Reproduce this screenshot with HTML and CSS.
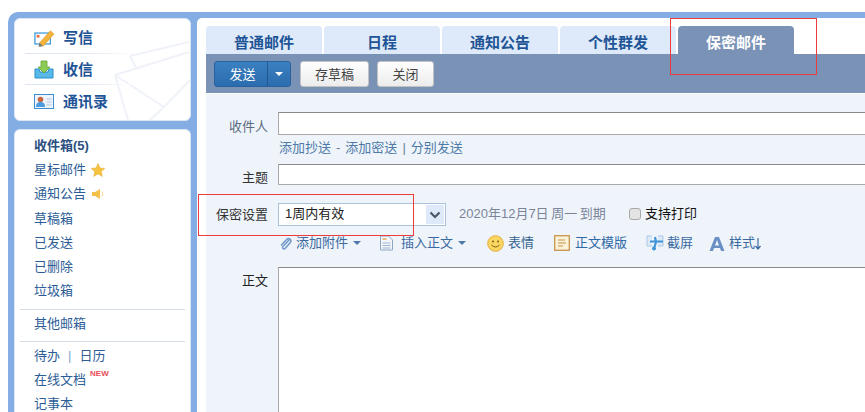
FILE: index.html
```html
<!DOCTYPE html>
<html lang="zh">
<head>
<meta charset="utf-8">
<title>写信</title>
<link rel="stylesheet" href="styles.css">
</head>
<body>
<div class="frame">
  <aside class="side">
    <div class="panel quick">
      <svg class="watermark" viewBox="0 0 90 80"><g fill="none" stroke="#eff2f8" stroke-width="2"><path d="M15 35 89 12M15 35 64 67 90 40M15 35 28 80M64 67 50 80"/><path d="M30 16 89 2M30 16l6 12"/></g></svg>
      <a class="quick-row">
        <svg class="qicon" viewBox="0 0 22 18"><rect x="1" y="3" width="17" height="12" fill="#fff" stroke="#3d9bd8" stroke-width="1.400"/><rect x="3" y="5" width="3" height="3" fill="#ef6a3a"/><path d="M6 14 18 0.500l4 3.500L10 17.500Z" fill="#f4b33a" stroke="#d98e1e" stroke-width=".6"/><path d="M5 18l1-4 4 3.500Z" fill="#777"/></svg>
        <span>写信</span>
      </a>
      <a class="quick-row">
        <svg class="qicon" viewBox="0 0 20 19"><path d="M1 9v9h18V9h-4l-1 3H6L5 9Z" fill="#58b8e6" stroke="#2b8ecb"/><path d="M7 1h6v6h3l-6 6-6-6h3Z" fill="#8ccb55" stroke="#5fa534" stroke-width=".8"/></svg>
        <span>收信</span>
      </a>
      <a class="quick-row">
        <svg class="qicon" viewBox="0 0 20 15"><rect x=".5" y=".5" width="19" height="14" fill="#eef4fb" stroke="#3f8fd0"/><circle cx="6.500" cy="5.500" r="2.800" fill="#c9683f"/><path d="M2 13c0-4 2-5 4.500-5s4.500 1 4.500 5Z" fill="#4b9be0"/><path d="M12.500 5h5M12.500 8h5M12.500 11h5" stroke="#b4c6dc"/></svg>
        <span>通讯录</span>
      </a>
    </div>
    <nav class="panel folders">
      <a class="folder strong">收件箱(5)</a>
      <a class="folder">星标邮件 <svg class="ficon" viewBox="0 0 14 14"><path d="M7 .5 9 5l4.800.4-3.600 3.200 1.100 4.800L7 10.900l-4.300 2.500 1.100-4.800L.2 5.400 5 5Z" fill="#f5c33f" stroke="#e3a92b" stroke-width=".5"/></svg></a>
      <a class="folder">通知公告 <svg class="ficon" viewBox="0 0 14 14"><path d="M1 5h3l5-3v10L4 9H1Z" fill="#f3c04a"/><path d="M11 4.500q1.500 2.500 0 5" fill="none" stroke="#f3d48a"/></svg></a>
      <a class="folder">草稿箱</a>
      <a class="folder">已发送</a>
      <a class="folder">已删除</a>
      <a class="folder">垃圾箱</a>
      <hr class="rule rule-a">
      <a class="folder">其他邮箱</a>
      <hr class="rule rule-b">
      <a class="folder">待办 <i class="bar">|</i> 日历</a>
      <a class="folder">在线文档<sup class="new">NEW</sup></a>
      <a class="folder">记事本</a>
    </nav>
  </aside>
  <main class="main">
    <div class="tabs">
      <a class="tab">普通邮件</a>
      <a class="tab">日程</a>
      <a class="tab">通知公告</a>
      <a class="tab">个性群发</a>
      <a class="tab active">保密邮件</a>
    </div>
    <div class="toolbar">
      <div class="send"><span class="send-label">发送</span><span class="send-drop"><i class="caret caret-white"></i></span></div>
      <button class="btn btn-save">存草稿</button>
      <button class="btn btn-close">关闭</button>
    </div>
    <form class="form">
      <div class="row">
        <label class="label muted nudge-a">收件人</label>
        <div class="input field-to"></div>
      </div>
      <div class="links">添加抄送<i class="sep">-</i>添加密送<i class="sep">|</i>分别发送</div>
      <div class="row">
        <label class="label nudge-b">主题</label>
        <div class="input field-subject"></div>
      </div>
      <div class="row row-secret">
        <label class="label">保密设置</label>
        <div class="select"><span class="select-value">1周内有效</span><span class="select-arrow"><svg viewBox="0 0 12 8" width="12" height="8"><path d="M1.500 1.500 6 6l4.500-4.500" fill="none" stroke="#4a5568" stroke-width="2.200"/></svg></span></div>
        <span class="expire">2020年12月7日 周一 到期</span>
        <span class="check"></span>
        <span class="print">支持打印</span>
      </div>
      <div class="tools">
        <a class="tool t-attach"><svg class="ticon" width="13" height="15" viewBox="0 0 13 15"><path d="M10.500 3.500 4 10.500c-1.500 1.800 1 3.200 2.300 1.800l5-5.800c2.200-2.800-1.500-5.500-3.700-3L2 9.500" fill="none" stroke="#6f97c8" stroke-width="1.500"/></svg>添加附件<i class="caret caret-blue"></i></a>
        <a class="tool t-insert"><svg class="ticon" width="15" height="16" viewBox="0 0 15 16"><path d="M1.500 1h8l4 4v10h-12Z" fill="#f3f6fb" stroke="#8ea7c6"/><path d="M3.500 4h4" stroke="#e9a957" stroke-width="1.500"/><path d="M3.500 8h8M3.500 10.500h8M3.500 13h8" stroke="#9db5d2"/></svg>插入正文<i class="caret caret-blue"></i></a>
        <a class="tool t-smile"><svg class="ticon" width="17" height="17" viewBox="0 0 17 17"><circle cx="8.500" cy="8.500" r="7.800" fill="#fbd75f" stroke="#e0ac3c"/><circle cx="6" cy="6.500" r="1" fill="#7a5a1a"/><circle cx="11" cy="6.500" r="1" fill="#7a5a1a"/><path d="M4.500 10q4 4 8 0" fill="none" stroke="#7a5a1a"/></svg>表情</a>
        <a class="tool t-template"><svg class="ticon" width="16" height="16" viewBox="0 0 16 16"><rect x=".7" y=".7" width="14.600" height="14.600" fill="#fbf1d8" stroke="#c7964d" stroke-width="1.300"/><path d="M4 5h7M4 8h8M4 11h5" stroke="#c7964d" stroke-width="1.200"/></svg>正文模版</a>
        <a class="tool t-shot"><svg class="ticon" width="18" height="16" viewBox="0 0 18 16"><path d="M6 1H1v10h5M12 1h5v10h-5" fill="#dceaf8" stroke="#a9c7e6"/><path d="M4 6.500h13M9 2l1 5-1.500 5" fill="none" stroke="#3f93d6" stroke-width="2.200"/><circle cx="8" cy="13.500" r="2" fill="#3f93d6"/></svg>截屏</a>
        <a class="tool t-style"><svg class="ticon" width="16" height="15" viewBox="0 0 16 15"><path d="M6 1h4l5.500 14h-3.500l-1-3H5l-1 3H.5ZM6 9.500h4L8 4Z" fill="#6a8fc4" fill-rule="evenodd"/></svg>样式<svg class="down" width="6" height="12" viewBox="0 0 6 12"><path d="M3 0v11M.5 8 3 11l2.500-3" fill="none" stroke="#3a6a9f" stroke-width="1.200"/></svg></a>
      </div>
      <div class="row row-body">
        <label class="label">正文</label>
        <div class="input editor"></div>
      </div>
    </form>
  </main>
</div>
<div class="mark mark-tab"></div>
<div class="mark mark-secret"></div>
</body>
</html>
```
FILE: styles.css
```css
* { box-sizing: border-box; }
html, body { margin: 0; height: 412px; overflow: hidden; background: #fff; }
body {
  position: relative;
  padding: 12px 0 0 8px;
  font: 13px/20px "Liberation Sans", "Noto Sans CJK SC", sans-serif;
  color: #333;
}
a { color: inherit; text-decoration: none; }
i { font-style: normal; }

.frame {
  display: flex;
  gap: 6px;
  height: 400px;
  padding: 6px 0 0 6px;
  overflow: hidden;
  background: #84aee3;
  border-radius: 10px 0 0 0;
}
.side { flex: 0 0 177px; min-height: 0; display: flex; flex-direction: column; gap: 8px; }
.panel { background: #fff; border-radius: 6px; border: 1px solid #dbe6f5; }
.quick { position: relative; flex: none; height: 103px; padding: 3px 0 0 19px; overflow: hidden; }
.watermark { position: absolute; right: 0; bottom: 0; width: 90px; height: 80px; }
.quick-row {
  position: relative;
  display: flex;
  align-items: center;
  height: 31.500px;
  width: 110px;
  margin-left: -9px;
  padding: 1.500px 0 0 9px;
  font-size: 15px;
  font-weight: 700;
  color: #1f5596;
  border-bottom: 1px solid transparent;
  border-image: linear-gradient(90deg, #dde6f2 50%, #fff) 1;
}
.quick-row:last-child { border-bottom: 0; }
.qicon { flex: 0 0 20px; width: 20px; height: 19px; margin-right: 9px; }

.folders { flex: 1 0 auto; padding: 4px 5px 0 5px; border-bottom: 0; border-radius: 6px 6px 0 0; }
.folder {
  display: flex;
  align-items: center;
  height: 24.200px;
  padding-left: 14px;
  color: #2c5d97;
}
.strong { font-weight: 700; color: #2a4f80; }
.ficon { width: 14px; height: 14px; margin-left: 5px; }
.rule { margin: 0; border: 0; border-top: 1px solid #d3dce8; }
.rule-a { margin-top: 6px; margin-bottom: 2px; }
.rule-b { margin-top: 4px; margin-bottom: 2px; }
.bar { margin: 0 8px; color: #7fa6cf; }
.new { align-self: flex-start; margin: 0 0 0 4px; font: 700 8px/12px "Liberation Sans", sans-serif; color: #e8505b; }

.main {
  flex: 1;
  min-width: 0;
  display: flex;
  flex-direction: column;
  padding: 8px 0 0 9px;
  background: #fff;
  border-radius: 5px 0 0 0;
}
.tabs { display: flex; gap: 2px; height: 28px; flex: none; }
.tab {
  flex: 0 0 116px;
  height: 28px;
  line-height: 34px;
  text-align: center;
  font-size: 15px;
  font-weight: 700;
  color: #1f5596;
  background: #deeaf9;
  border-radius: 4px 4px 0 0;
}
.tab.active { background: #7a92b6; color: #fff; }
.toolbar { display: flex; flex: none; height: 39px; padding: 7px 0 0 8px; background: #7a92b6; }
.send {
  display: flex;
  width: 77px;
  height: 26px;
  background: linear-gradient(#3b80c0, #2b6cae);
  border: 1px solid #2a609c;
  border-radius: 3px;
  color: #fff;
}
.send-label { flex: 0 0 52px; padding-left: 3px; text-align: center; line-height: 26px; }
.send-drop { flex: 1; display: flex; align-items: center; justify-content: center; border-left: 1px solid #22578f; }
.caret { display: inline-block; border: 4px solid transparent; border-bottom: 0; border-top-width: 4px; }
.caret-white { border-top-color: #fff; }
.caret-blue { border-top-color: #4f79ad; margin-left: 5px; }
.btn {
  height: 26px;
  padding: 2px 0 0;
  font: inherit;
  color: #444;
  background: linear-gradient(#fff, #ececec);
  border: 1px solid #c2c2c2;
  border-radius: 3px;
}
.btn-save { width: 69px; margin-left: 9px; }
.btn-close { width: 57px; margin-left: 8px; }

.form {
  flex: 1;
  min-height: 0;
  display: flex;
  flex-direction: column;
  margin-top: 1px;
  padding-top: 18px;
  background: #eff4fb;
}
.row { display: flex; align-items: center; flex: none; }
.label { flex: 0 0 62px; text-align: right; margin-right: 10px; color: #333; }
.muted { color: #5b6b80; }
.nudge-a { height: 23px; line-height: 29px; }
.nudge-b { height: 21px; line-height: 28px; }
.input { flex: 1; background: #fff; border: 1px solid #a9a9a9; border-top-color: #8a8a8a; border-right: 0; }
.field-to { height: 23px; }
.field-subject { height: 21px; }
.links { flex: none; height: 29px; padding: 3px 0 0 73px; line-height: 20px; color: #4d7aa8; }
.sep { margin: 0 5px; color: #6a7f96; }
.row-secret { margin-top: 18px; height: 23px; }
.select {
  flex: 0 0 168px;
  display: flex;
  justify-content: space-between;
  height: 23px;
  padding: 1px 1px 1px 6px;
  background: #fff;
  border: 1px solid #a9c2dc;
  color: #222;
  line-height: 17px;
}
.select-arrow { flex: 0 0 18px; display: flex; align-items: center; justify-content: center; background: #deeaf9; }
.expire { flex: none; width: 170px; margin: 0 0 1px 13px; color: #7a8599; white-space: nowrap; word-spacing: -1px; }
.check { width: 12px; height: 12px; margin-bottom: 2px; border: 1px solid #a8a8a8; border-radius: 3px; background: #e4e4e4; }
.print { margin: 0 0 2px 4px; color: #111; }

.tools { display: flex; flex: none; height: 20px; margin-top: 7px; padding-left: 73px; color: #3a6a9f; }
.tool { display: flex; align-items: center; white-space: nowrap; }
.ticon { margin-right: 4px; flex: none; }
.t-insert { margin-left: 18px; }
.t-insert .ticon { margin-right: 7px; }
.t-smile { margin-left: 21px; color: #36638f; }
.t-template { margin-left: 20px; color: #2f6aa5; }
.t-template .ticon { margin-right: 5px; }
.t-shot { margin-left: 19px; }
.t-shot .ticon { margin-right: 3px; }
.t-style { margin-left: 16px; }
.down { flex: none; margin-top: 1px; }
.row-body { flex: 1; min-height: 0; align-items: stretch; margin-top: 14px; }
.row-body .label { padding-top: 4px; color: #222; }
.editor { border-bottom: 0; }

.mark { position: absolute; border: 1px solid #ee3b3b; pointer-events: none; }
.mark-tab { left: 670px; top: 18px; width: 147px; height: 57px; }
.mark-secret { left: 198px; top: 194px; width: 216px; height: 42px; }
```
